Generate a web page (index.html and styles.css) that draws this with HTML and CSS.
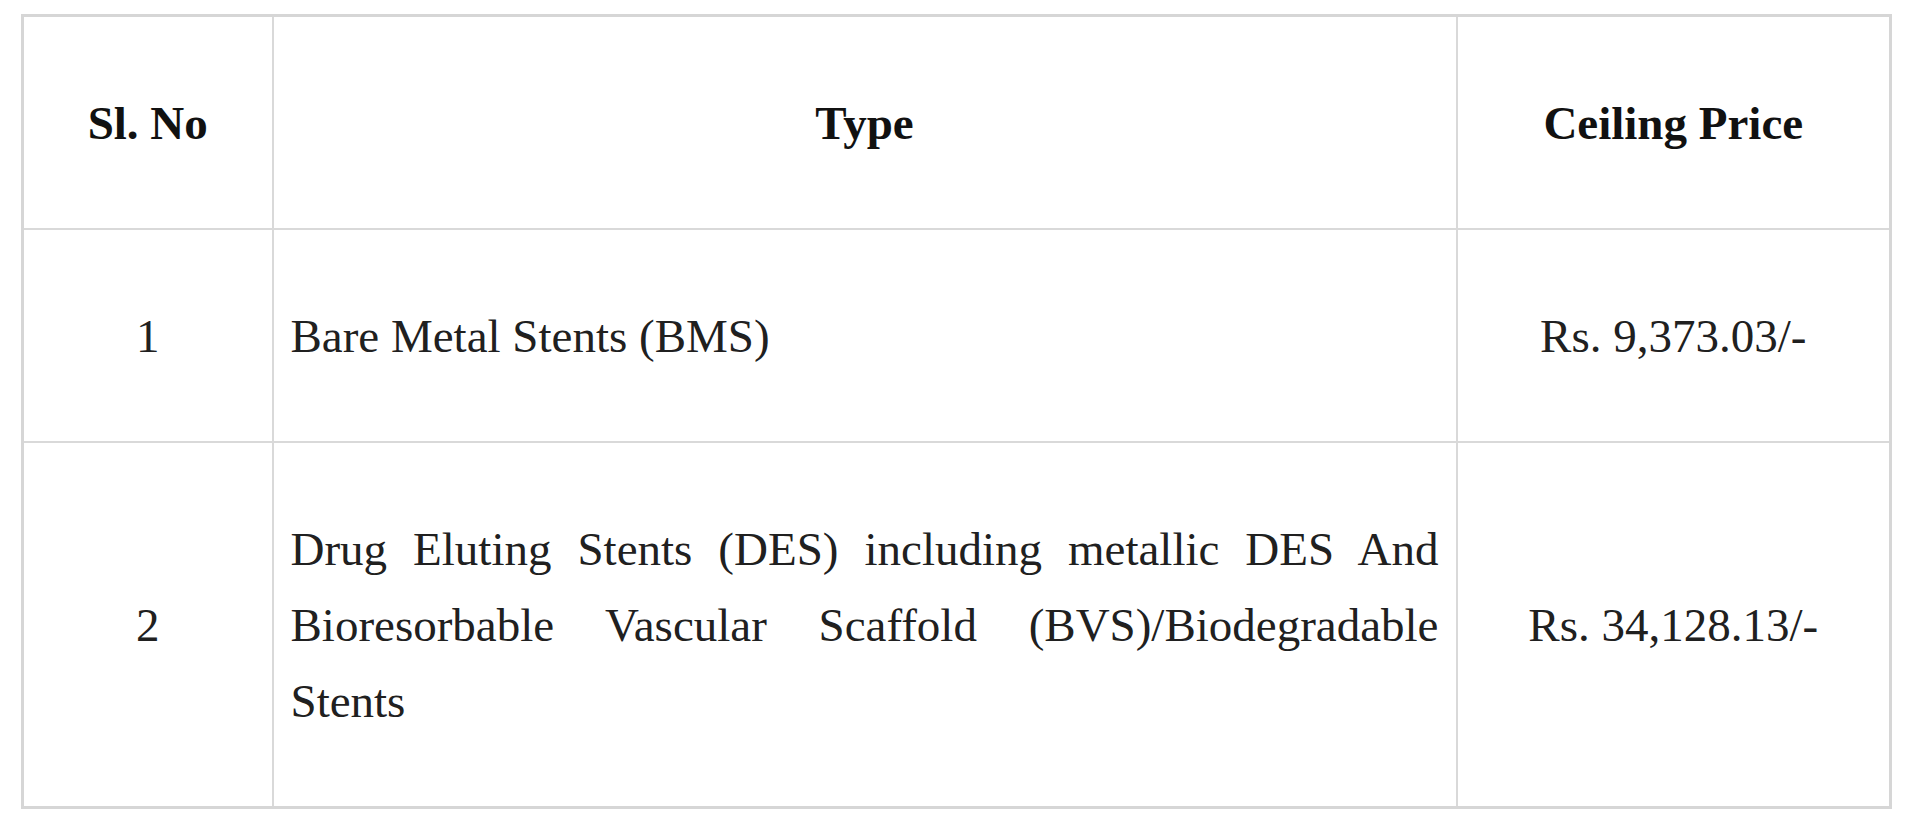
FILE: index.html
```html
<!DOCTYPE html>
<html lang="en">
<head>
<meta charset="utf-8">
<title>Stent Ceiling Prices</title>
<link rel="stylesheet" href="styles.css">
</head>
<body>
<table class="price-table">
  <colgroup>
    <col class="col-no">
    <col class="col-type">
    <col class="col-price">
  </colgroup>
  <thead>
    <tr>
      <th>Sl. No</th>
      <th>Type</th>
      <th>Ceiling Price</th>
    </tr>
  </thead>
  <tbody>
    <tr>
      <td class="center">1</td>
      <td class="type">Bare Metal Stents (BMS)</td>
      <td class="center">Rs. 9,373.03/-</td>
    </tr>
    <tr>
      <td class="center">2</td>
      <td class="type justify">Drug Eluting Stents (DES) including metallic DES And Bioresorbable Vascular Scaffold (BVS)/Biodegradable Stents</td>
      <td class="center">Rs. 34,128.13/-</td>
    </tr>
  </tbody>
</table>
</body>
</html>
```

FILE: styles.css
```css
html, body {
  margin: 0;
  padding: 0;
  background: #ffffff;
}

body {
  padding: 14px 0 0 21px;
  font-family: "Liberation Serif", "Times New Roman", serif;
  color: #202020;
}

.price-table {
  border-collapse: collapse;
  table-layout: fixed;
  width: 1868px;
  border: 3px solid #d6d6d6;
}

.col-no { width: 250px; }
.col-type { width: 1184px; }
.col-price { width: 434px; }

.price-table th,
.price-table td {
  border: 2px solid #d9d9d9;
  padding: 68px 17px 67px;
  font-size: 47px;
  line-height: 76px;
  vertical-align: middle;
}

.price-table th {
  font-weight: bold;
  text-align: center;
  color: #111111;
}

.center {
  text-align: center;
}

.type {
  text-align: left;
}

.justify {
  text-align: justify;
}
```
